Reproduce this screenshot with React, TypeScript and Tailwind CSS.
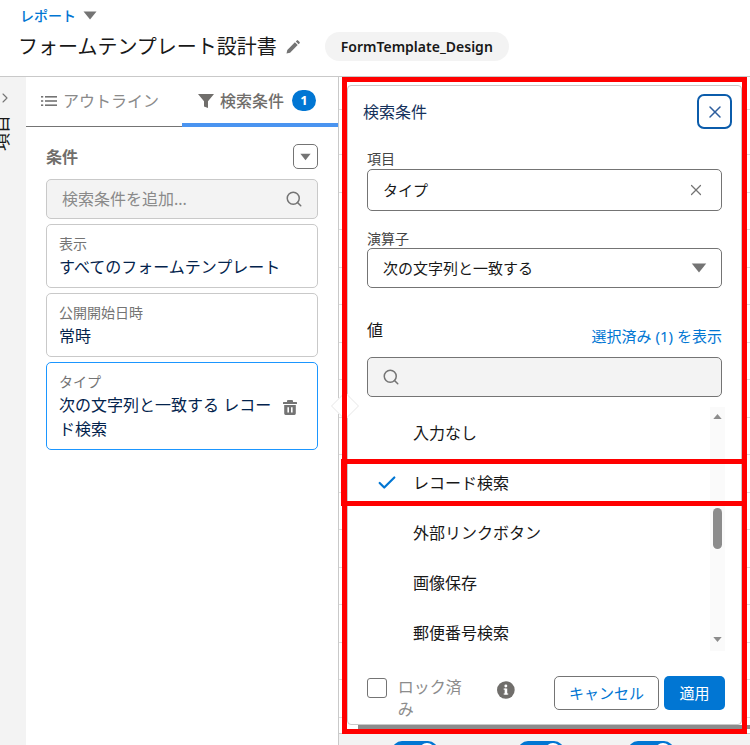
import { Check, ChevronRight, Search, X } from 'lucide-react';

const font = "font-['Noto_Sans','Noto_Sans_CJK_JP',sans-serif]";

function Caret({ className }: { className: string }) {
  return (
    <svg viewBox="0 0 14 9" className={className} fill="currentColor">
      <path d="M0.5 0.5h13L7 8.5z" />
    </svg>
  );
}

function Toggle() {
  return (
    <div className="relative h-[20px] w-[46px] rounded-full bg-[#0176d3]">
      <div className="absolute right-[3px] top-[2px] h-[16px] w-[16px] rounded-full bg-white" />
    </div>
  );
}

function FilterCard({ label, value }: { label: string; value: string }) {
  return (
    <div className="flex h-[64px] flex-col justify-center rounded-[5px] border border-[#c9c9c9] px-[12px]">
      <div className="text-[14px] leading-[22px] text-[#747474]">{label}</div>
      <div className="text-[16px] leading-[24px] text-[#03234d]">{value}</div>
    </div>
  );
}

function Popover() {
  const options = ['入力なし', 'レコード検索', '外部リンクボタン', '画像保存', '郵便番号検索'];

  return (
    <div className="absolute left-[8px] top-[8px] z-10 h-[640px] w-[395px] rounded-[4px] border border-[#c9c9c9] bg-white">
      <div className="absolute left-[-13px] top-[310px] -z-10 h-[20px] w-[20px] rotate-45 border border-[#eeeeee] bg-white" />

      <div className="flex h-[50px] items-center justify-between pl-[15px] pr-[9px] pt-[1px]">
        <div className="text-[16px] text-[#16325c]">検索条件</div>
        <button className="flex h-[35px] w-[35px] items-center justify-center rounded-[7px] border-[2.5px] border-[#0b5cab] text-[#2e5f9e]">
          <X size={20} strokeWidth={1.8} />
        </button>
      </div>

      <div className="px-[19px]">
        <div className="pt-[13px] text-[14px] leading-[20px] text-[#444444]">項目</div>
        <div className="flex h-[42px] items-center justify-between rounded-[5px] border border-[#747474] pl-[15px] pr-[16px] text-[15px] text-[#181818]">
          <span>タイプ</span>
          <X size={18} strokeWidth={1.6} className="text-[#747474]" />
        </div>

        <div className="pt-[18px] text-[14px] leading-[19px] text-[#444444]">演算子</div>
        <div className="flex h-[40px] items-center justify-between rounded-[5px] border border-[#747474] pl-[15px] pr-[14px] text-[15px] text-[#181818]">
          <span>次の文字列と一致する</span>
          <Caret className="h-[10px] w-[16px] text-[#747474]" />
        </div>

        <div className="flex h-[69px] items-start justify-between pt-[30px]">
          <span className="text-[16px] leading-[24px] text-[#181818]">値</span>
          <span className="pt-[6px] text-[15px] leading-[24px] text-[#0176d3]">選択済み (1) を表示</span>
        </div>
        <div className="flex h-[40px] items-center rounded-[5px] border border-[#747474] bg-[#f3f3f3] pl-[14px]">
          <Search size={18} strokeWidth={2} className="text-[#747474]" />
        </div>
      </div>

      <div className="mt-[10px] flex h-[244px] pr-[16px]">
        <ul className="flex-1">
          {options.map((o, i) => (
            <li key={o} className="flex h-[50px] items-center pt-[1px] text-[16px] text-[#181818]">
              <span className="flex w-[65px] justify-end pr-[15px]">
                {i === 1 && <Check size={22} strokeWidth={2.4} className="text-[#0176d3]" />}
              </span>
              {o}
            </li>
          ))}
        </ul>
        <div className="flex h-full w-[15px] flex-col items-center bg-[#fafafa] pt-[6px]">
          <Caret className="h-[7px] w-[9px] rotate-180 text-[#8c8c8c]" />
          <div className="mt-[88px] h-[41px] w-[9px] rounded-full bg-[#8c8c8c]" />
          <Caret className="mt-[87px] h-[7px] w-[9px] text-[#8c8c8c]" />
        </div>
      </div>

      <div className="flex items-start pl-[19px] pr-[16px] pt-[25px]">
        <div className="mt-[2px] h-[20px] w-[20px] rounded-[3px] border border-[#747474]" />
        <span className="ml-[11px] text-[16px] leading-[22px] text-[#8c8c8c]">ロック済み</span>
        <svg viewBox="0 0 18 18" className="ml-[21px] mt-[5px] h-[18px] w-[18px]">
          <circle cx="9" cy="9" r="9" fill="#706e6b" />
          <rect x="7.8" y="7.5" width="2.6" height="6" fill="#fff" />
          <rect x="6.8" y="7.5" width="2" height="1.2" fill="#fff" />
          <rect x="6.8" y="12.5" width="4.6" height="1.2" fill="#fff" />
          <circle cx="9" cy="5" r="1.5" fill="#fff" />
        </svg>
        <button className="ml-[39px] h-[34px] w-[107px] rounded-[5px] border border-[#747474] text-[15px] text-[#0176d3]">キャンセル</button>
        <button className="ml-[5px] h-[34px] w-[62px] rounded-[5px] bg-[#0176d3] text-[15px] text-white">適用</button>
      </div>
    </div>
  );
}

export default function App() {
  const rows = Array.from({ length: 15 });

  return (
    <div className={`${font} relative flex h-[745px] w-[750px] flex-col overflow-hidden bg-white`}>
      <header className="h-[77px] shrink-0 border-b border-[#c9c9c9] pl-[18px]">
        <div className="flex h-[31px] items-center gap-[7px] pl-[2px]">
          <span className="text-[14px] font-medium text-[#0176d3]">レポート</span>
          <Caret className="h-[9px] w-[14px] text-[#747474]" />
        </div>
        <div className="flex h-[31px] items-center">
          <span className="text-[20px] text-[#181818]">フォームテンプレート設計書</span>
          <svg viewBox="0 0 14 14" className="ml-[9px] h-[14px] w-[14px] text-[#747474]" fill="currentColor">
            <path d="M0.5 13.5l0.8-3.6 7.6-7.6 2.8 2.8-7.6 7.6zM9.8 1.4l1-1a1 1 0 0 1 1.3 0l1.5 1.5a1 1 0 0 1 0 1.3l-1 1z" />
          </svg>
          <span className="ml-[25px] flex h-[29px] w-[184px] items-center justify-center rounded-full bg-[#f3f3f3] text-[14px] font-semibold text-[#181818]">
            FormTemplate_Design
          </span>
        </div>
      </header>

      <div className="flex min-h-0 flex-1">
        <aside className="flex w-[26px] shrink-0 flex-col items-start overflow-hidden bg-[#f3f3f3] pt-[13px]">
          <ChevronRight size={16} strokeWidth={1.6} className="-ml-[3px] text-[#747474]" />
          <span className="-ml-[11px] mt-[9px] rotate-180 text-[18px] leading-[24px] text-[#181818] [text-orientation:sideways] [writing-mode:vertical-rl]">
            項目
          </span>
        </aside>

        <section className="w-[313px] shrink-0 border-r border-[#c9c9c9]">
          <div className="flex h-[50px]">
            <div className="flex w-[156px] items-center border-b border-[#747474] pb-[1px] pl-[15px] text-[16px] text-[#8a8a8a]">
              <svg viewBox="0 0 16 12" className="mr-[6px] h-[12px] w-[16px] text-[#747474]" fill="currentColor">
                <rect x="0" y="1" width="2.2" height="1.6" />
                <rect x="4" y="1" width="12" height="1.6" />
                <rect x="0" y="5.2" width="2.2" height="1.6" />
                <rect x="4" y="5.2" width="12" height="1.6" />
                <rect x="0" y="9.4" width="2.2" height="1.6" />
                <rect x="4" y="9.4" width="12" height="1.6" />
              </svg>
              アウトライン
            </div>
            <div className="flex w-[156px] items-center border-b-[4px] border-[#4a94f0] pl-[16px] pt-[1px] text-[16px] font-medium text-[#706e6b]">
              <svg viewBox="0 0 16 16" className="mr-[6px] h-[16px] w-[16px] text-[#706e6b]" fill="currentColor">
                <path d="M0 1h16L10 8.2V15l-4-1.6V8.2z" />
              </svg>
              検索条件
              <span className="ml-[8px] flex h-[21px] w-[24px] items-center justify-center rounded-full bg-[#0176d3] text-[13px] font-bold text-white">
                1
              </span>
            </div>
          </div>

          <div className="pl-[20px] pr-[20px]">
            <div className="flex h-[52px] items-center justify-between pt-[7px]">
              <span className="text-[16px] font-bold text-[#706e6b]">条件</span>
              <button className="flex h-[25px] w-[25px] items-center justify-center rounded-[5px] border border-[#747474]">
                <Caret className="h-[8px] w-[11px] text-[#747474]" />
              </button>
            </div>
            <div className="flex h-[40px] items-center justify-between rounded-[5px] border border-[#c9c9c9] bg-[#f3f3f3] pl-[15px] pr-[14px] text-[16px] text-[#8a8a8a]">
              <span>検索条件を追加...</span>
              <Search size={18} strokeWidth={2} className="text-[#747474]" />
            </div>
            <div className="mt-[5px] flex flex-col gap-[5px]">
              <FilterCard label="表示" value="すべてのフォームテンプレート" />
              <FilterCard label="公開開始日時" value="常時" />
              <div className="flex h-[88px] items-center rounded-[5px] border border-[#1b96ff] pl-[12px] pr-[7px]">
                <div className="w-[222px]">
                  <div className="text-[14px] leading-[22px] text-[#747474]">タイプ</div>
                  <div className="text-[16px] leading-[24px] text-[#03234d]">次の文字列と一致する レコード検索</div>
                </div>
                <svg viewBox="0 0 14 15" className="ml-[2px] mt-[2px] h-[15px] w-[14px] text-[#747474]" fill="currentColor">
                  <path d="M5 0h4a1 1 0 0 1 1 1v1h3.5a.5.5 0 0 1 .5.5V4H0V2.5A.5.5 0 0 1 .5 2H4V1a1 1 0 0 1 1-1z" />
                  <path fillRule="evenodd" d="M1.2 5h11.6v8.6a1.4 1.4 0 0 1-1.4 1.4H2.6a1.4 1.4 0 0 1-1.4-1.4zM4.4 7.2v5.4h1.6V7.2zM8 7.2v5.4h1.6V7.2z" />
                </svg>
              </div>
            </div>
          </div>
        </section>

        <main className="relative flex min-w-0 flex-1 flex-col">
          <div className="min-h-0 flex-1 overflow-hidden">
            <div className="h-[33px] border-b border-[#dddddd]" />
            <div className="h-[45px] border-b border-[#dddddd]" />
            {rows.map((_, i) => (
              <div key={i} className="h-[37.5px] border-b border-[#dddddd]" />
            ))}
          </div>
          <div className="flex h-[8px] justify-end bg-white">
            <div className="h-[4px] w-[392px] bg-[#8c8c8c]" />
          </div>
          <div className="flex h-[12px] shrink-0 gap-[80px] overflow-hidden border-t border-[#c9c9c9] bg-[#f3f3f3] pl-[53px] pt-[7px]">
            <Toggle />
            <div className="-ml-[0px] flex gap-[64px]">
              <Toggle />
              <Toggle />
            </div>
          </div>
          <Popover />
        </main>
      </div>

      {/* red annotation boxes drawn over the capture */}
      <div className="pointer-events-none absolute left-[342px] top-[77px] z-20 h-[657px] w-[405px] border-[5px] border-[#ff0000]" />
      <div className="pointer-events-none absolute left-[341px] top-[459px] z-20 h-[47px] w-[406px] border-[5px] border-[#ff0000]" />
    </div>
  );
}
